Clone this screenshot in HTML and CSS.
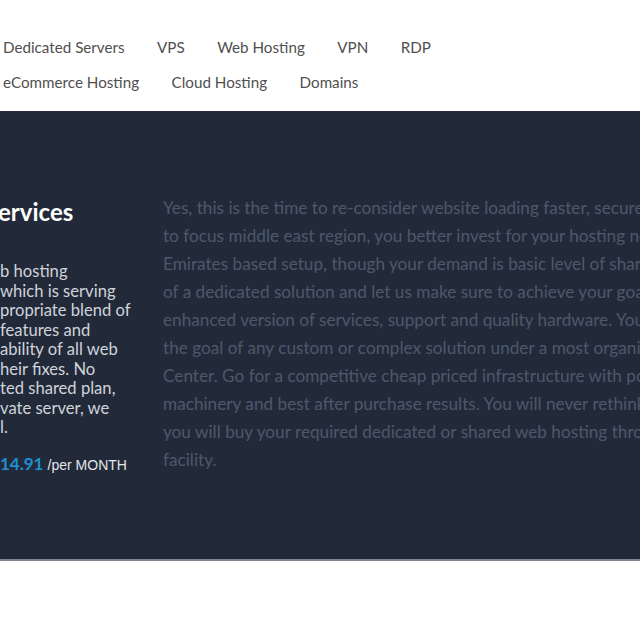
FILE: index.html
```html
<!DOCTYPE html>
<html>
<head>
<meta charset="utf-8">
<link rel="stylesheet" href="styles.css">
</head>
<body>
<nav class="menu">
  <ul class="menu-row">
    <li>Dedicated Servers</li>
    <li>VPS</li>
    <li>Web Hosting</li>
    <li>VPN</li>
    <li>RDP</li>
  </ul>
  <ul class="menu-row">
    <li>eCommerce Hosting</li>
    <li>Cloud Hosting</li>
    <li>Domains</li>
  </ul>
</nav>
<section class="band">
  <div class="left">
    <h2 class="title">ervices</h2>
    <div class="lines">
      <span class="ln">b hosting</span>
      <span class="ln">which is serving</span>
      <span class="ln">propriate blend of</span>
      <span class="ln">features and</span>
      <span class="ln">ability of all web</span>
      <span class="ln">heir fixes. No</span>
      <span class="ln">ted shared plan,</span>
      <span class="ln">vate server, we</span>
      <span class="ln">l.</span>
    </div>
    <div class="price"><span class="amount">14.91</span> <span class="per">/per MONTH</span></div>
  </div>
  <div class="right">
    <p class="desc">Yes, this is the time to re-consider website loading faster, secure<br>to focus middle east region, you better invest for your hosting needs<br>Emirates based setup, though your demand is basic level of shared<br>of a dedicated solution and let us make sure to achieve your goals<br>enhanced version of services, support and quality hardware. You<br>the goal of any custom or complex solution under a most organized<br>Center. Go for a competitive cheap priced infrastructure with power<br>machinery and best after purchase results. You will never rethink<br>you will buy your required dedicated or shared web hosting through<br>facility.</p>
  </div>
</section>
</body>
</html>
```
FILE: styles.css
```css
html, body {
  margin: 0;
  padding: 0;
  background: #ffffff;
  font-family: Lato, "Open Sans", sans-serif;
  overflow: hidden;
}
.menu {
  padding: 29px 0 0 3px;
  height: 111px;
  box-sizing: border-box;
}
.menu-row {
  list-style: none;
  margin: 0;
  padding: 0;
  display: flex;
  gap: 32.5px;
  height: 35px;
  align-items: center;
  white-space: nowrap;
}
.menu-row li {
  font-size: 15.2px;
  color: #4f4f4f;
  line-height: 20px;
}
.band {
  background: #222a39;
  height: 448px;
  border-bottom: 2px solid #7f858e;
  display: flex;
  width: 100%;
  overflow: hidden;
}
.left {
  width: 163px;
  flex: none;
  padding-top: 86px;
  box-sizing: border-box;
}
.title {
  margin: 0 0 0 -2px;
  font-size: 24px;
  font-weight: 700;
  color: #ffffff;
  line-height: 30px;
}
.lines {
  margin-top: 35px;
  display: flex;
  flex-direction: column;
}
.ln {
  font-size: 16.6px;
  line-height: 19.5px;
  color: #cfd3d9;
  white-space: nowrap;
}
.price {
  margin-top: 15px;
  white-space: nowrap;
}
.amount {
  font-size: 17px;
  font-weight: 700;
  color: #1e8fd3;
}
.per {
  font-family: "Liberation Sans", Arial, sans-serif;
  font-size: 14px;
  color: #e3e6ea;
}
.right {
  flex: none;
  width: 560px;
  padding-top: 83px;
}
.desc {
  margin: 0;
  font-size: 17.2px;
  line-height: 28px;
  color: #4e586b;
  white-space: nowrap;
}
```
